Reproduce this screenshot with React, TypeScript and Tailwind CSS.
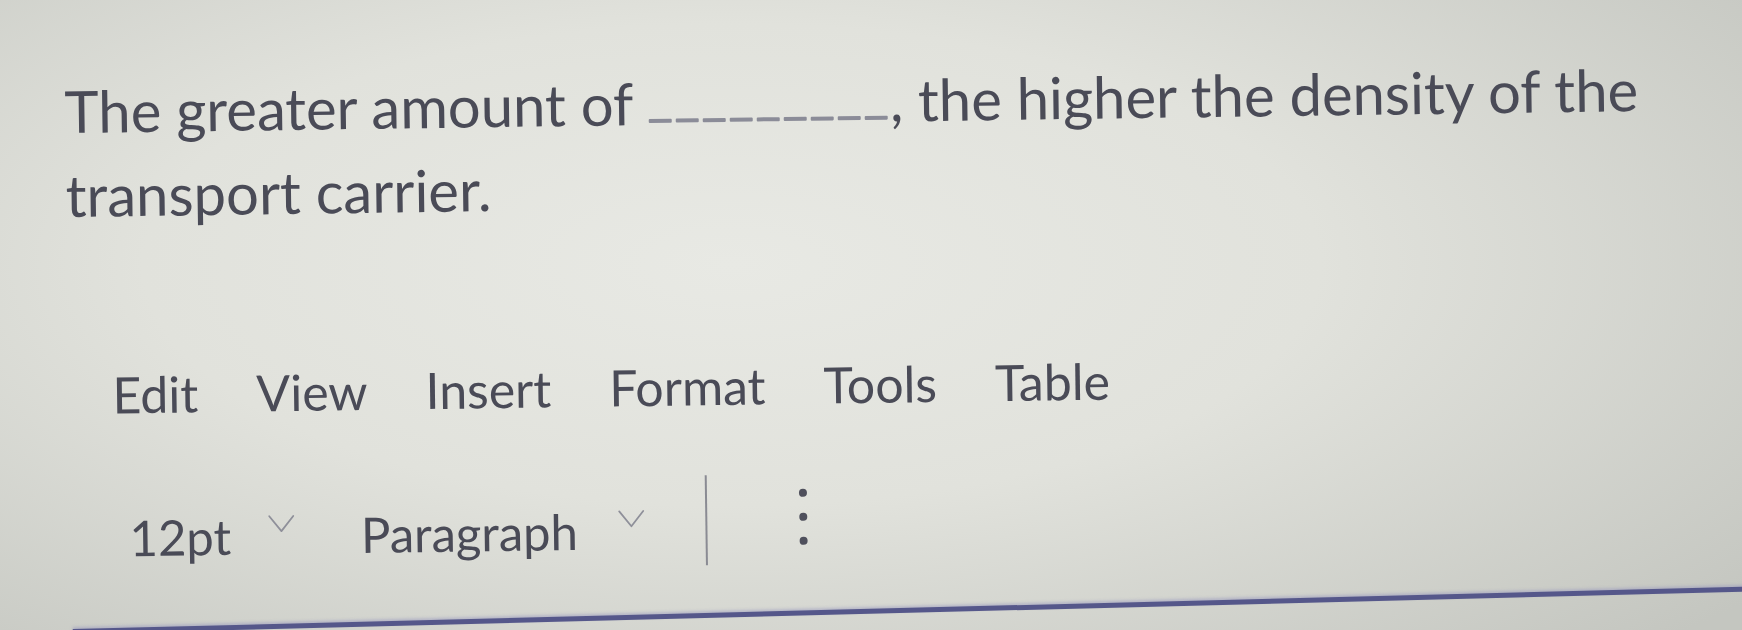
const menuItems = ['Edit', 'View', 'Insert', 'Format', 'Tools', 'Table'];

function Blank() {
	return (
		<span className="inline-flex gap-[4px] align-baseline mx-[2px] translate-y-[-2px]">
			{Array.from({ length: 9 }).map((_, i) => (
				<span key={i} className="block w-[23px] h-[4px] bg-[#8b8c98] rounded-[1px]" />
			))}
		</span>
	);
}

// thin "v" dropdown caret
function Caret() {
	return (
		<svg width="28" height="19" viewBox="0 0 28 19" className="translate-y-[2px]">
			<path d="M2 2 L14 17 L26 2" fill="none" stroke="#8f909a" strokeWidth="1.8" strokeLinecap="round" strokeLinejoin="round" />
		</svg>
	);
}

export default function App() {
	return (
		<div
			className="w-full h-[630px] overflow-hidden bg-[radial-gradient(ellipse_75%_85%_at_42%_42%,#e8e9e4_0%,#e1e2dc_45%,#c4c6c0_100%)] text-[#4a4b57]"
			style={{ fontFamily: 'Lato, "Open Sans", sans-serif' }}
		>
			<div className="origin-top-left -rotate-[0.8deg] pt-[70px]">
				<p className="pl-[63px] w-[1680px] text-[58px] leading-[84px]">
					The greater amount of <Blank />, the higher the density of the transport carrier.
				</p>

				<nav className="flex gap-[58px] pl-[107px] mt-[128px] text-[50px] leading-[1.2]">
					{menuItems.map((item) => (
						<span key={item}>{item}</span>
					))}
				</nav>

				<div className="flex items-center h-[90px] mt-[54px] pl-[122px] text-[49px] leading-[1.2]">
					<span className="translate-y-[14px]">12pt</span>
					<span className="ml-[36px]">
						<Caret />
					</span>
					<span className="ml-[66px] translate-y-[14px]">Paragraph</span>
					<span className="ml-[40px]">
						<Caret />
					</span>
					<span className="ml-[60px] w-[2px] h-full bg-[#8a8b93] translate-y-[5px]" />
					<span className="ml-[92px] flex flex-col gap-[16px] translate-y-[3px]">
						<span className="block w-[8px] h-[8px] rounded-full bg-[#4f505c]" />
						<span className="block w-[8px] h-[8px] rounded-full bg-[#4f505c]" />
						<span className="block w-[8px] h-[8px] rounded-full bg-[#4f505c]" />
					</span>
				</div>

				<div className="ml-[64px] mt-[60px] w-[1780px] h-[5px] bg-[#55578a] shadow-[0_-2px_3px_rgba(150,150,190,0.5)] origin-left -rotate-[0.65deg]" />
			</div>
		</div>
	);
}
